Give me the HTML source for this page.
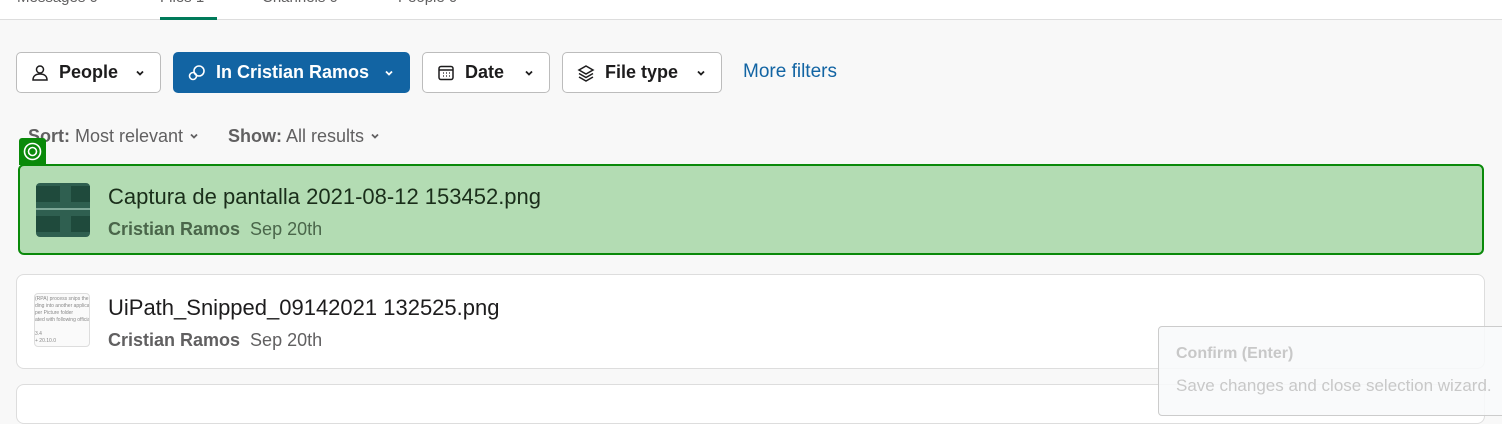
<!DOCTYPE html><html><head><style>
*{box-sizing:border-box;margin:0;padding:0}
body{width:1502px;height:400px;overflow:hidden;background:#f8f8f8;font-family:"Liberation Sans",sans-serif;position:relative;color:#1d1c1d}
.top{position:absolute;left:0;top:0;width:1502px;height:20px;background:#fff;border-bottom:1px solid #ddd}
.tab{position:absolute;top:-11px;font-size:15px;color:#616061}
.ul{position:absolute;left:160px;top:17px;width:57px;height:3px;background:#007a5a}
.btn{position:absolute;top:52px;height:41px;border:1px solid #bcbcbc;border-radius:5px;background:#fff;font-size:18px;font-weight:bold;display:flex;align-items:center;padding-left:14px}
.btn svg{margin-right:10px}
.btn svg.chev{position:absolute;right:14px;top:14px;margin:0}
.sort{position:absolute;top:126px;font-size:18px;color:#616061}
.card{position:absolute;left:16px;width:1469px;border:1px solid #ddd;border-radius:8px;background:#fff}
.title{position:absolute;left:91px;font-size:22px}
.meta{position:absolute;left:91px;font-size:18px;color:#616061}
</style></head><body>
<div class="top">
<span class="tab" style="left:17px">Messages 0</span>
<span class="tab" style="left:160px">Files 1</span>
<span class="tab" style="left:262px">Channels 0</span>
<span class="tab" style="left:398px">People 0</span>
<div class="ul"></div></div>

<div class="btn" style="left:16px;width:145px">
<svg width="18" height="18" viewBox="0 0 18 18" fill="none" stroke="#1d1c1d" stroke-width="1.5"><circle cx="9" cy="5.5" r="3.5"/><path d="M2 16c0-4 3-6 7-6s7 2 7 6z"/></svg>People
<svg class="chev" width="12" height="12" viewBox="0 0 12 12"><path d="M3 4.5l3 3 3-3" stroke="#1d1c1d" stroke-width="1.8" fill="none"/></svg></div>
<div class="btn" style="left:173px;width:237px;background:#1264a3;border-color:#1264a3;color:#fff">
<svg width="18" height="18" viewBox="0 0 18 18" fill="none" stroke="#fff" stroke-width="1.6"><circle cx="11" cy="7" r="5"/><circle cx="5" cy="12" r="3.5"/></svg>In Cristian Ramos
<svg class="chev" width="12" height="12" viewBox="0 0 12 12"><path d="M3 4.5l3 3 3-3" stroke="#fff" stroke-width="1.8" fill="none"/></svg></div>
<div class="btn" style="left:422px;width:128px">
<svg width="18" height="18" viewBox="0 0 18 18" fill="none" stroke="#1d1c1d" stroke-width="1.5"><rect x="2" y="2.5" width="14" height="13" rx="2"/><path d="M2 6h14"/><path d="M6 9h1M9 9h1M12 9h1M6 12h1M9 12h1M12 12h1" stroke-width="1.3"/></svg>Date
<svg class="chev" width="12" height="12" viewBox="0 0 12 12"><path d="M3 4.5l3 3 3-3" stroke="#1d1c1d" stroke-width="1.8" fill="none"/></svg></div>
<div class="btn" style="left:562px;width:160px">
<svg width="18" height="18" viewBox="0 0 18 18" fill="none" stroke="#1d1c1d" stroke-width="1.5"><path d="M9 2l7 4-7 4-7-4z"/><path d="M2 9.5l7 4 7-4M2 13l7 4 7-4"/></svg>File type
<svg class="chev" width="12" height="12" viewBox="0 0 12 12"><path d="M3 4.5l3 3 3-3" stroke="#1d1c1d" stroke-width="1.8" fill="none"/></svg></div>
<div style="position:absolute;left:743px;top:61px;font-size:19px;color:#1264a3">More filters</div>

<div class="sort" style="left:28px"><b>Sort:</b> Most relevant <svg width="12" height="12" viewBox="0 0 12 12"><path d="M3 4.5l3 3 3-3" stroke="#616061" stroke-width="1.8" fill="none"/></svg></div>
<div class="sort" style="left:228px"><b>Show:</b> All results <svg width="12" height="12" viewBox="0 0 12 12"><path d="M3 4.5l3 3 3-3" stroke="#616061" stroke-width="1.8" fill="none"/></svg></div>

<div class="card" style="top:274px;height:95px">
<div style="position:absolute;left:17px;top:18px;width:56px;height:54px;border:1px solid #ddd;border-radius:4px;background:#fafafa;font-size:5px;color:#888;overflow:hidden;line-height:7px;padding-top:2px;white-space:nowrap">(RPA) process snips the ima<br>ding into another applicati<br>per Picture folder<br>ated with following official<br><br>3.4<br>+ 20.10.0</div>
<div class="title" style="top:20px">UiPath_Snipped_09142021 132525.png</div>
<div class="meta" style="top:55px"><b>Cristian Ramos</b>&nbsp; Sep 20th</div></div>
<div class="card" style="top:384px;height:40px"></div>

<div style="position:absolute;left:19px;top:138px;width:27px;height:27px;background:#0a8a0a;border-radius:3px 3px 0 0">
<svg width="27" height="27" viewBox="0 0 27 27" fill="none" stroke="#fff" stroke-width="1.6"><circle cx="13.5" cy="13.5" r="8"/><circle cx="13.5" cy="13.5" r="4"/></svg></div>
<div style="position:absolute;left:18px;top:164px;width:1466px;height:91px;background:#b3dcb3;border:2.5px solid #0a8a0a;border-radius:6px">
<div style="position:absolute;left:16px;top:17px;width:54px;height:54px;background:#2f5f50;border-radius:4px;overflow:hidden">
<div style="position:absolute;left:0;top:3px;width:24px;height:16px;background:#1f4a3c"></div>
<div style="position:absolute;left:35px;top:3px;width:19px;height:16px;background:#1f4a3c"></div>
<div style="position:absolute;left:0;top:33px;width:24px;height:16px;background:#1f4a3c"></div>
<div style="position:absolute;left:35px;top:33px;width:19px;height:16px;background:#1f4a3c"></div>
<div style="position:absolute;left:0;top:25px;width:54px;height:2px;background:#7fa898"></div></div>
<div class="title" style="left:88px;top:18px;color:#1a2e1a">Captura de pantalla 2021-08-12 153452.png</div>
<div class="meta" style="left:88px;top:53px;color:#4a664a"><b>Cristian Ramos</b>&nbsp; Sep 20th</div></div>

<div style="position:absolute;left:1158px;top:326px;width:360px;height:90px;background:rgba(248,249,250,0.88);border:1px solid #ccc;border-radius:4px">
<div style="position:absolute;left:17px;top:18px;font-size:16px;font-weight:bold;color:#c8c8c8">Confirm (Enter)</div>
<div style="position:absolute;left:17px;top:49px;font-size:17px;color:#c8c8c8;white-space:nowrap">Save changes and close selection wizard.</div></div>
</body></html>
